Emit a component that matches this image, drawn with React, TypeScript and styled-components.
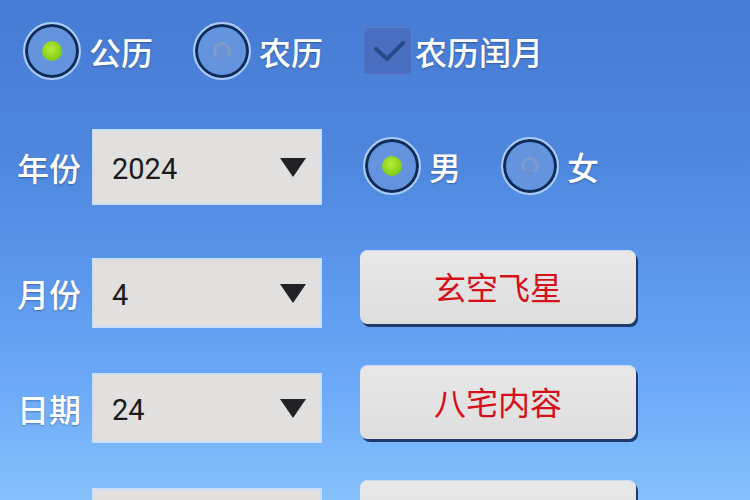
import styled, { createGlobalStyle } from "styled-components";

const GlobalStyle = createGlobalStyle`
  html, body {
    margin: 0;
    padding: 0;
  }
  body {
    font-family: "Noto Sans CJK SC", "Noto Sans", sans-serif;
  }
`;

interface IField {
  label: string;
  value: string;
  action?: string;
}

const fields: IField[] = [
  { label: "月份", value: "4", action: "玄空飞星" },
  { label: "日期", value: "24", action: "八宅内容" },
  { label: "时辰", value: "子", action: "九宫飞星" },
];

const Radio = ({ checked, label }: { checked?: boolean; label: string }) => (
  <Option>
    <RadioRing>{checked ? <GreenDot /> : <EmptyDot />}</RadioRing>
    <OptionText>{label}</OptionText>
  </Option>
);

const Select = ({ value }: { value: string }) => (
  <SelectBox>
    <SelectValue>{value}</SelectValue>
    <Arrow />
  </SelectBox>
);

const App = () => {
  return (
    <>
      <GlobalStyle />
      <Page>
        <TopBar>
          <Radio checked label="公历" />
          <Radio label="农历" />
          <Option>
            <CheckBox>
              <svg width="38" height="28" viewBox="0 0 38 28">
                <path
                  d="M7 12 L18 22 L34 6"
                  fill="none"
                  stroke="#274a8a"
                  strokeWidth="4"
                  strokeLinecap="round"
                  strokeLinejoin="round"
                />
              </svg>
            </CheckBox>
            <CheckText>农历闰月</CheckText>
          </Option>
        </TopBar>
        <Form>
          <FirstRow>
            <Label>年份</Label>
            <Select value="2024" />
            <Gender>
              <Radio checked label="男" />
              <Radio label="女" />
            </Gender>
          </FirstRow>
          {fields.map((f) => (
            <Row key={f.label}>
              <Label offset={6}>{f.label}</Label>
              <SelectSlot>
                <Select value={f.value} />
              </SelectSlot>
              <ActionButton>{f.action}</ActionButton>
            </Row>
          ))}
        </Form>
      </Page>
    </>
  );
};

const Page = styled.div`
  width: 750px;
  height: 500px;
  overflow: hidden;
  background: linear-gradient(
    180deg,
    #477bd4 0%,
    #4e86de 30%,
    #5b97ec 55%,
    #6daaf8 78%,
    #86c1fb 100%
  );
`;
const TopBar = styled.div`
  display: flex;
  align-items: center;
  padding: 22px 0 0 23px;
  height: 58px;
`;
const Option = styled.div`
  display: flex;
  align-items: center;
  margin-right: 40px;
`;
const RadioRing = styled.div`
  width: 58px;
  height: 58px;
  box-sizing: border-box;
  border-radius: 50%;
  border: 2px solid #a9cbf6;
  box-shadow: inset 0 0 0 3px #0f2b58;
  background: #6494de;
  display: flex;
  align-items: center;
  justify-content: center;
`;
const GreenDot = styled.div`
  width: 20px;
  height: 20px;
  border-radius: 50%;
  background: radial-gradient(circle at 45% 40%, #b4ec3a, #84cc14 70%, #6aa80e);
`;
const EmptyDot = styled.div`
  width: 18px;
  height: 18px;
  border-radius: 50%;
  box-sizing: border-box;
  border: 3px solid #7f9bcb;
  border-bottom-color: #6a8fd2;
  background: #6a94d8;
`;
const OptionText = styled.span`
  margin-left: 8px;
  font-size: 32px;
  font-weight: 500;
  line-height: 1;
  color: #fff;
  text-shadow: 0 1px 2px rgba(0, 0, 0, 0.3);
`;
const CheckBox = styled.div`
  width: 49px;
  height: 48px;
  box-sizing: border-box;
  border-radius: 4px;
  background: #4a6fc0;
  border: 1px solid #5a82cc;
  display: flex;
  align-items: center;
  justify-content: center;
`;
const CheckText = styled(OptionText)`
  margin-left: 3px;
`;
const Form = styled.div`
  display: flex;
  flex-direction: column;
  gap: 36px;
  padding: 49px 0 0 15px;
`;
const FirstRow = styled.div`
  display: flex;
  align-items: center;
  height: 76px;
  margin-bottom: 9px;
`;
const Row = styled.div`
  display: flex;
  align-items: flex-start;
  height: 79px;
`;
const Label = styled.div<{ offset?: number }>`
  width: 77px;
  margin-top: ${(p) => p.offset || 0}px;
  align-self: center;
  font-size: 32px;
  font-weight: 500;
  line-height: 1;
  color: #fff;
  text-shadow: 0 1px 2px rgba(0, 0, 0, 0.3);
  padding-left: 2px;
  box-sizing: border-box;
`;
const SelectSlot = styled.div`
  padding-top: 8px;
`;
const SelectBox = styled.div`
  width: 230px;
  height: 76px;
  ${SelectSlot} & {
    height: 70px;
  }
  box-sizing: border-box;
  border: 2px solid #c9def8;
  background: #e1e0df;
  display: flex;
  align-items: center;
  justify-content: space-between;
  padding: 3px 14px 0 18px;
`;
const SelectValue = styled.span`
  font-family: Roboto, "Noto Sans", sans-serif;
  font-size: 29px;
  color: #1b1b1b;
`;
const Arrow = styled.div`
  width: 0;
  height: 0;
  margin-top: -2px;
  border-left: 13px solid transparent;
  border-right: 13px solid transparent;
  border-top: 19px solid #222226;
`;
const Gender = styled.div`
  display: flex;
  align-items: center;
  margin-left: 41px;
  margin-top: -2px;
`;
const ActionButton = styled.button`
  width: 276px;
  height: 74px;
  margin-left: 38px;
  border: none;
  border-radius: 8px;
  background: linear-gradient(180deg, #e8e8e8, #dedede);
  box-shadow: 2px 3px 0 #1e3a68, 0 1px 0 #c7d9f2 inset;
  color: #d6101a;
  font-family: "Noto Sans CJK SC", sans-serif;
  font-size: 32px;
  line-height: 1;
  padding-bottom: 4px;
  cursor: pointer;
`;

export default App;
